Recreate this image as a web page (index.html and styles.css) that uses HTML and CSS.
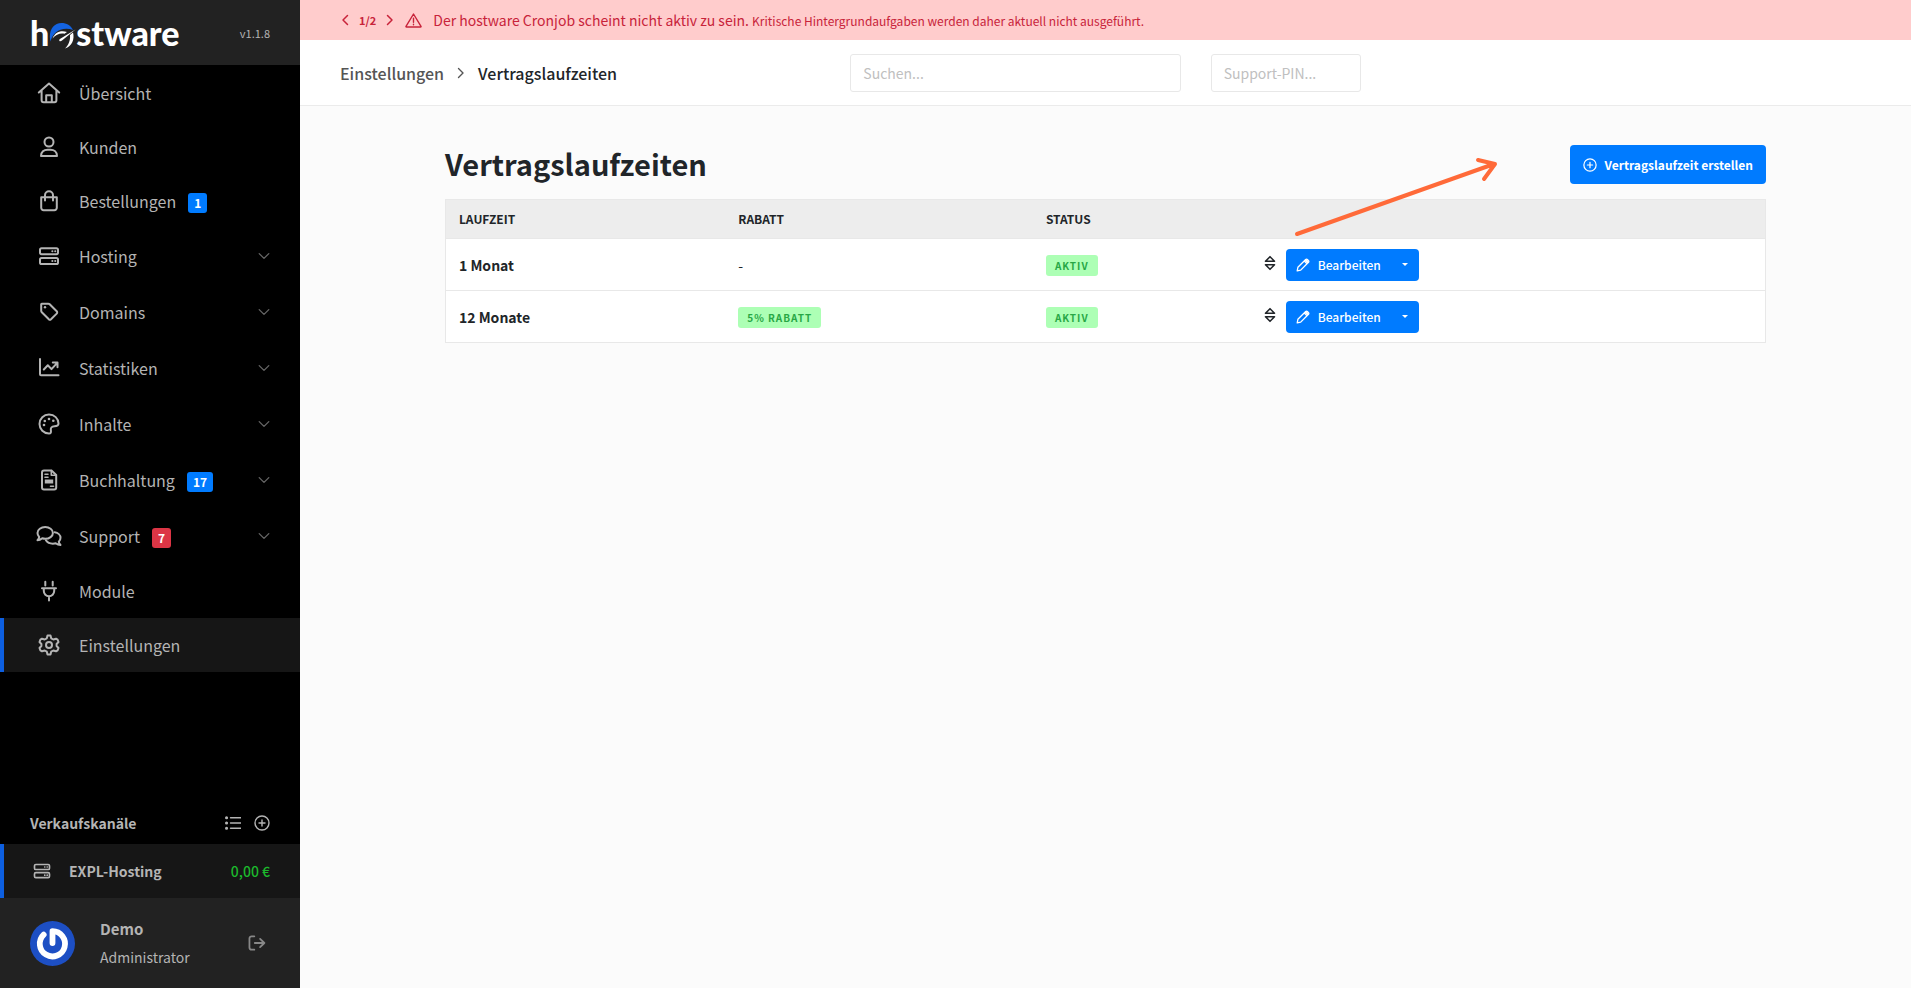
FILE: index.html
```html
<!DOCTYPE html>
<html lang="de">
<head>
<meta charset="utf-8">
<title>Vertragslaufzeiten – hostware</title>
<link rel="stylesheet" href="styles.css">
</head>
<body>
<svg class="sprite" aria-hidden="true">
  <symbol id="i-server" viewBox="0 0 24 24"><rect x="3" y="4.2" width="18" height="6" rx="1.6"/><rect x="3" y="14" width="18" height="6" rx="1.6"/><path d="M15.3 7.2h.1M18.2 7.2h.1M15.3 17h.1M18.2 17h.1" stroke-width="2"/></symbol>
  <symbol id="i-down" viewBox="0 0 12 12"><path d="M1.2 3.6 6 8.4l4.800-4.800"/></symbol>
  <symbol id="i-left" viewBox="0 0 12 12"><path d="M8.500 1.500 4 6l4.500 4.500"/></symbol>
  <symbol id="i-right" viewBox="0 0 12 12"><path d="M3.500 1.500 8 6l-4.500 4.500"/></symbol>
  <symbol id="i-plus" viewBox="0 0 16 16"><circle cx="8" cy="8" r="7"/><path d="M8 5v6M5 8h6"/></symbol>
  <symbol id="i-pen" viewBox="0 0 14 14"><path d="M1.200 12.800l.7-3.500 7.800-7.800a1.200 1.200 0 0 1 1.700 0l1.100 1.100a1.200 1.200 0 0 1 0 1.700L4.700 12.100zM8.300 3l2.700 2.700"/><path d="M10 2.300l1.700 1.700" stroke-width="2.400"/></symbol>
  <symbol id="i-sort" viewBox="0 0 12 16"><path d="M1.500 6.200h9L6 1.700zM1.500 9.800h9L6 14.300z"/></symbol>
</svg>

<aside class="sidebar">
  <header class="brand">
    <a class="logo" href="#" aria-label="hostware"><span>h</span><svg class="logo-o" viewBox="0 0 27 27"><path d="M1.500 19.500C-1 9.500 4 1 12.500 1 17.500 1 22 3.500 24 8c-4-1.700-8.500-1.800-12.500-.2-5 2-8.500 6-10 11.700z" fill="#1463e0"/><path d="M3.500 16.500C6 10 12 7.800 18 10l-2.500 1.700c-4-1-8.500.5-12 4.800z" fill="#fff"/><path d="M10.500 19c-.8-1 .2-2 1.200-2.500L26.500 7.500 13 18.600c-.8.700-2 1-2.500.4z" fill="#fff"/><path d="M24 10.500c1.800 7-1 13.500-8 16 3.500-3.500 5.500-8 5-13.500z" fill="#fff"/></svg><span>stware</span></a>
    <span class="version">v1.1.8</span>
  </header>
  <nav class="nav">
    <a class="item" href="#"><svg viewBox="0 0 24 24"><path d="M1.800 11.500 12 2.600l10.200 8.900M4.600 9.500v9.700a2 2 0 0 0 2 2h10.800a2 2 0 0 0 2-2V9.500M9.200 21v-6.800h5.600V21"/></svg>Übersicht</a>
    <a class="item" href="#"><svg viewBox="0 0 24 24"><circle cx="12" cy="7" r="4.500"/><path d="M4 21c0-4.300 3-6.300 6.500-6.300h3C17 14.700 20 16.700 20 21z"/></svg>Kunden</a>
    <a class="item" href="#"><svg viewBox="0 0 24 24"><path d="M4.200 8.300h15.600v10.500a2.400 2.400 0 0 1-2.400 2.400H6.600a2.400 2.400 0 0 1-2.400-2.400zM8 11.500V6.200a4 4 0 0 1 8 0v5.300"/></svg>Bestellungen<span class="count">1</span></a>
    <a class="item group" href="#"><svg><use href="#i-server"/></svg>Hosting<svg class="chev"><use href="#i-down"/></svg></a>
    <a class="item group" href="#"><svg viewBox="0 0 24 24"><path d="M4.200 4.200v6.600c0 .6.200 1.100.6 1.500l7 7a1.600 1.600 0 0 0 2.200 0l5.700-5.700a1.600 1.600 0 0 0 0-2.300l-7-7a2 2 0 0 0-1.400-.6H4.700a.5.500 0 0 0-.5.500z"/><circle cx="8" cy="7.300" r="1.200" class="dot"/></svg>Domains<svg class="chev"><use href="#i-down"/></svg></a>
    <a class="item group" href="#"><svg viewBox="0 0 24 24"><path d="M3 3v15.300a1 1 0 0 0 1 1h17.500M6.800 13.500l4-4.200 3.700 3.800 5.500-6M15.800 6.500h4.700v4.700"/></svg>Statistiken<svg class="chev"><use href="#i-down"/></svg></a>
    <a class="item group" href="#"><svg viewBox="0 0 24 24"><path d="M12 2.500a9.500 9.500 0 0 0 0 19c1.800 0 2.200-1.200 1.900-2.700-.6-2.700.6-4.600 3.600-4.600 2.500 0 4-.3 4-2.700 0-5-4.200-9-9.500-9z"/><circle cx="7" cy="13" r="1.300" class="dot"/><circle cx="7.800" cy="9" r="1.300" class="dot"/><circle cx="12" cy="7" r="1.300" class="dot"/><circle cx="16.300" cy="8.700" r="1.300" class="dot"/></svg>Inhalte<svg class="chev"><use href="#i-down"/></svg></a>
    <a class="item group" href="#"><svg viewBox="0 0 24 24"><path d="M5 4.500a2 2 0 0 1 2-2h7.500L19.200 7v12.500a2 2 0 0 1-2 2H7a2 2 0 0 1-2-2z"/><path d="M14.300 2.500v4.700h4.700M8 6.200h3M8 9.200h3M13.500 18.300h3" stroke-width="1.600"/><path d="M7.800 11.500h8.400v4H7.800z" class="dot"/></svg>Buchhaltung<span class="count">17</span><svg class="chev"><use href="#i-down"/></svg></a>
    <a class="item group" href="#"><svg class="wide" viewBox="0 0 26 24"><path d="M1.500 16.300c1.200-1.300 1.600-2.600 1.700-3.300C2.200 11.800 1.500 10.400 1.500 8.900 1.500 5.600 5 3 9.200 3s7.700 2.600 7.700 5.900-3.500 5.900-7.700 5.900c-1 0-2-.2-2.900-.5-1.200 1-3 2-4.800 2z"/><path d="M18.700 8.200c3.300.5 5.800 2.800 5.800 5.600 0 1.500-.6 2.900-1.700 4 .1.700.6 2 1.700 3.200-1.800 0-3.500-.7-4.800-1.700-.9.300-1.900.4-2.900.4-3 0-5.600-1.400-6.900-3.400"/></svg>Support<span class="count red">7</span><svg class="chev"><use href="#i-down"/></svg></a>
    <a class="item" href="#"><svg viewBox="0 0 24 24"><path d="M8.300 2.700V6.500M15.700 2.700V6.500M5 9.200h14M6.800 9.200V12a5.200 5.200 0 0 0 10.400 0V9.200M12 17.200v4.300"/></svg>Module</a>
    <a class="item active" href="#"><svg viewBox="0 0 24 24"><path d="M9.800 5.300 10.500 2.600h3l.7 2.700 2.100 1.200 2.700-.8 1.600 1 .9 2.300-1.900 2v2l1.900 2-.9 2.300-1.600 1-2.700-.8-2.100 1.200-.7 2.700h-3l-.7-2.700-2.100-1.200-2.700.8-1.600-1-.9-2.300 1.900-2v-2l-1.900-2 .9-2.300 1.600-1 2.700.8z"/><circle cx="12" cy="12" r="3"/></svg>Einstellungen</a>
  </nav>
  <section class="channels">
    <div class="channels-head"><span>Verkaufskanäle</span>
      <button type="button" aria-label="Liste"><svg viewBox="0 0 16 16"><path d="M5.500 2.800H16M5.500 8H16M5.500 13.200H16"/><path d="M1.500 2.800h.1M1.500 8h.1M1.500 13.200h.1" stroke-width="3"/></svg></button>
      <button type="button" aria-label="Hinzufügen"><svg><use href="#i-plus"/></svg></button></div>
    <a class="channel" href="#"><svg><use href="#i-server"/></svg><span>EXPL-Hosting</span><b>0,00 €</b></a>
  </section>
  <footer class="user">
    <svg class="avatar" viewBox="0 0 45 45"><circle cx="22.500" cy="22.500" r="22.500" fill="#1d4fc4"/><path d="M13.700 13.700A12.600 12.600 0 1 0 22.500 10.200V22" fill="none" stroke="#fff" stroke-width="5.800" stroke-linecap="round" stroke-linejoin="round"/></svg>
    <div class="who"><strong>Demo</strong><span>Administrator</span></div>
    <button type="button" aria-label="Abmelden"><svg viewBox="0 0 20 18"><path d="M7 1.500H4a2.500 2.500 0 0 0-2.500 2.500v10A2.500 2.500 0 0 0 4 16.500h3M7.500 9H18M13.500 4.300 18.300 9l-4.800 4.700"/></svg></button>
  </footer>
</aside>

<div class="main">
  <div class="alert" role="alert">
    <button type="button" aria-label="Zurück"><svg><use href="#i-left"/></svg></button><b>1/2</b><button type="button" aria-label="Weiter"><svg><use href="#i-right"/></svg></button>
    <svg class="warn" viewBox="0 0 17 15"><path d="M8.500 1 16 13.300q.3.700-.5.700H1.500q-.8 0-.5-.7zM8.500 5.200v4M8.500 11.200v.6"/></svg>
    <p>Der hostware Cronjob scheint nicht aktiv zu sein. <small>Kritische Hintergrundaufgaben werden daher aktuell nicht ausgeführt.</small></p>
  </div>
  <div class="topbar">
    <nav class="crumbs"><a href="#">Einstellungen</a><svg><use href="#i-right"/></svg><span>Vertragslaufzeiten</span></nav>
    <form class="search"><input type="text" aria-label="Suchen" placeholder="Suchen..."><input class="pin" type="text" aria-label="Support-PIN" placeholder="Support-PIN..."></form>
  </div>
  <main class="content">
    <div class="page-head">
      <h1>Vertragslaufzeiten</h1>
      <button type="button" class="btn create"><svg><use href="#i-plus"/></svg>Vertragslaufzeit erstellen</button>
      <svg class="arrow" viewBox="0 0 206 84"><path d="M4 78 201 8M185 4l17 4-11 15"/></svg>
    </div>
    <table>
      <colgroup><col class="c1"><col class="c2"><col class="c3"><col></colgroup>
      <thead><tr><th>Laufzeit</th><th>Rabatt</th><th>Status</th><th></th></tr></thead>
      <tbody>
        <tr><td><b>1 Monat</b></td><td>-</td><td><span class="tag">Aktiv</span></td><td><div class="actions"><svg><use href="#i-sort"/></svg><div class="split"><button type="button" class="btn"><svg><use href="#i-pen"/></svg>Bearbeiten</button><button type="button" class="btn toggle" aria-label="Mehr"><i></i></button></div></div></td></tr>
        <tr><td><b>12 Monate</b></td><td><span class="tag">5% Rabatt</span></td><td><span class="tag">Aktiv</span></td><td><div class="actions"><svg><use href="#i-sort"/></svg><div class="split"><button type="button" class="btn"><svg><use href="#i-pen"/></svg>Bearbeiten</button><button type="button" class="btn toggle" aria-label="Mehr"><i></i></button></div></div></td></tr>
      </tbody>
    </table>
  </main>
</div>
</body>
</html>
```
FILE: styles.css
```css
* { box-sizing: border-box; }
body {
  margin: 0;
  min-height: 100vh;
  display: grid;
  grid-template-columns: 300px 1fr;
  font: 14px/22px "Noto Sans CJK SC", "Noto Sans", sans-serif;
  color: #212529;
  background: #fbfbfb;
}
a { color: inherit; text-decoration: none; }
button, input { font: inherit; color: inherit; }
button { border: 0; padding: 0; background: none; cursor: pointer; }
svg { flex: none; fill: none; stroke: currentColor; stroke-width: 2; stroke-linecap: round; stroke-linejoin: round; }
.sprite { display: none; }
.dot { fill: currentColor; stroke: none; }

/* Sidebar */
.sidebar { display: flex; flex-direction: column; background: #000; color: #b4b4b4; }
.brand { height: 65px; padding: 0 30px; display: flex; align-items: center; justify-content: space-between; background: #222; }
.logo { display: flex; align-items: center; font: 900 34px/36px Lato, sans-serif; color: #fff; }
.logo-o { width: 27px; height: 27px; margin-top: 6px; stroke: none; }
.version { font-size: 11px; }
.nav { padding-top: 1px; }
.item { height: 54px; padding: 0 30px 0 36px; display: flex; align-items: center; font-size: 16px; }
.item svg { width: 26px; height: 24px; margin-right: 17px; }
.item.group { height: 56px; }
.item .chev { width: 12px; height: 12px; margin: 0 0 0 auto; color: #666; stroke-width: 1.3; }
.item.active, .channel { background: #161616; border-left: 4px solid #0d5fe0; padding-left: 32px; }
.count { margin: 3px 0 0 12px; padding: 0 6px; border-radius: 3px; background: #007bff; color: #fff; font-size: 12px; font-weight: 700; line-height: 20px; }
.count.red { background: #dc3545; }
.channels { margin-top: auto; }
.channels-head { height: 42px; padding: 0 30px; display: flex; align-items: center; gap: 13px; font-weight: 700; }
.channels-head span { flex: 1; }
.channels-head svg { display: block; width: 16px; height: 16px; stroke-width: 1.4; }
.channel { height: 54px; padding: 0 30px 0 28px; display: flex; align-items: center; font-weight: 700; }
.channel svg { width: 20px; height: 20px; margin-right: 17px; }
.channel b { margin-left: auto; font-weight: 500; color: #1cb82c; }
.user { height: 90px; padding: 0 34px 0 30px; display: flex; align-items: center; background: #222; }
.avatar { width: 45px; height: 45px; margin-right: 25px; stroke: none; }
.who { flex: 1; display: flex; flex-direction: column; gap: 4px; line-height: 24px; }
.who strong { font-size: 15px; }
.user button svg { display: block; width: 18px; height: 16px; color: #888; }

/* Main column */
.main { display: flex; flex-direction: column; min-width: 0; }
.alert { height: 40px; padding: 0 39px; display: flex; align-items: center; background: #fcc; color: #c8233a; }
.alert button svg { display: block; width: 12px; height: 12px; stroke-width: 1.5; }
.alert b { margin: 0 8px; font-size: 11px; }
.alert .warn { width: 17px; height: 15px; margin: 0 11px 0 9px; stroke-width: 1.4; }
.alert p { margin: 0; }
.alert small { font-size: 12px; }
.topbar { height: 66px; padding: 0 40px; display: grid; grid-template-columns: repeat(3, 1fr); align-items: center; background: #fff; border-bottom: 1px solid #ebebeb; }
.crumbs { display: flex; align-items: center; gap: 11px; font-size: 16px; font-weight: 500; }
.crumbs a { color: #555; }
.crumbs svg { width: 12px; height: 12px; color: #555; stroke-width: 1.4; }
.search { display: flex; gap: 30px; }
.search input { flex: 1; min-width: 0; height: 38px; padding: 0 12px; border: 1px solid #e8e8e8; border-radius: 3px; background: #fff; outline: 0; }
.search .pin { flex: 0 0 150px; }
.search input::placeholder { color: #c0c0c0; opacity: 1; }
.content { width: 82%; margin: 0 auto; padding-top: 39px; }
.page-head { position: relative; display: flex; align-items: center; justify-content: space-between; margin-bottom: 15px; }
h1 { margin: 0; font-size: 29px; line-height: 36px; font-weight: 700; }
.page-head h1 { padding-bottom: 3px; }
.btn { display: flex; align-items: center; border-radius: 4px; background: #007bff; color: #fff; font-size: 12px; font-weight: 500; }
.create { height: 39px; padding: 0 13px; gap: 8px; font-weight: 700; }
.create svg { width: 14px; height: 14px; stroke-width: 1.4; }
.arrow { position: absolute; top: 11px; right: 267px; width: 206px; height: 84px; color: #ff6a39; stroke-width: 4; pointer-events: none; }
table { width: 100%; table-layout: fixed; border-collapse: collapse; border: 1px solid #e8e8e8; background: #fff; }
.c1 { width: 21.2%; }
.c2 { width: 23.3%; }
.c3 { width: 16.5%; }
th { height: 39px; padding: 0 13px 1px; background: #ededed; font-size: 12px; text-align: left; text-transform: uppercase; }
td { height: 52px; padding: 0 13px; border-top: 1px solid #e8e8e8; }
.tag { display: inline-block; padding: 0 9px; border-radius: 3px; background: #adffb5; color: #28a745; font-size: 10px; font-weight: 700; line-height: 21px; letter-spacing: 1px; text-transform: uppercase; vertical-align: middle; }
.actions { display: flex; align-items: center; gap: 10px; }
.actions > svg { width: 12px; height: 16px; margin-bottom: 3px; stroke-width: 1.6; }
.split { display: flex; }
.split .btn { height: 32px; padding: 0 10px; gap: 8px; border-radius: 4px 0 0 4px; }
.split .btn svg { width: 14px; height: 14px; stroke-width: 1.3; }
.split .toggle { padding: 0 11px; border-radius: 0 4px 4px 0; }
.toggle i { border: 3px solid transparent; border-top-color: #fff; border-bottom: 0; }
```
